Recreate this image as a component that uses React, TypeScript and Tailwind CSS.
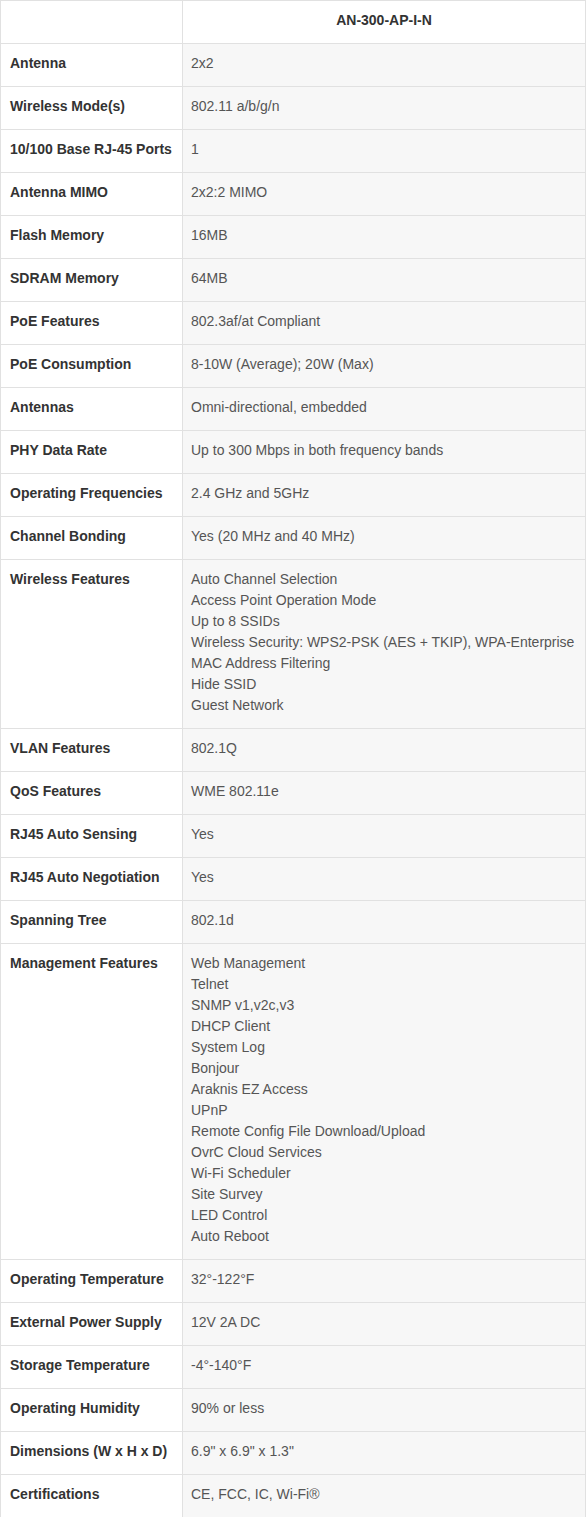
import React from 'react'

// 规格表数据：[标签, 值或多行值]
const specs: [string, string | string[]][] = [
  ['Antenna', '2x2'],
  ['Wireless Mode(s)', '802.11 a/b/g/n'],
  ['10/100 Base RJ-45 Ports', '1'],
  ['Antenna MIMO', '2x2:2 MIMO'],
  ['Flash Memory', '16MB'],
  ['SDRAM Memory', '64MB'],
  ['PoE Features', '802.3af/at Compliant'],
  ['PoE Consumption', '8-10W (Average); 20W (Max)'],
  ['Antennas', 'Omni-directional, embedded'],
  ['PHY Data Rate', 'Up to 300 Mbps in both frequency bands'],
  ['Operating Frequencies', '2.4 GHz and 5GHz'],
  ['Channel Bonding', 'Yes (20 MHz and 40 MHz)'],
  [
    'Wireless Features',
    [
      'Auto Channel Selection',
      'Access Point Operation Mode',
      'Up to 8 SSIDs',
      'Wireless Security: WPS2-PSK (AES + TKIP), WPA-Enterprise',
      'MAC Address Filtering',
      'Hide SSID',
      'Guest Network',
    ],
  ],
  ['VLAN Features', '802.1Q'],
  ['QoS Features', 'WME 802.11e'],
  ['RJ45 Auto Sensing', 'Yes'],
  ['RJ45 Auto Negotiation', 'Yes'],
  ['Spanning Tree', '802.1d'],
  [
    'Management Features',
    [
      'Web Management',
      'Telnet',
      'SNMP v1,v2c,v3',
      'DHCP Client',
      'System Log',
      'Bonjour',
      'Araknis EZ Access',
      'UPnP',
      'Remote Config File Download/Upload',
      'OvrC Cloud Services',
      'Wi-Fi Scheduler',
      'Site Survey',
      'LED Control',
      'Auto Reboot',
    ],
  ],
  ['Operating Temperature', '32°-122°F'],
  ['External Power Supply', '12V 2A DC'],
  ['Storage Temperature', '-4°-140°F'],
  ['Operating Humidity', '90% or less'],
  ['Dimensions (W x H x D)', '6.9" x 6.9" x 1.3"'],
  ['Certifications', 'CE, FCC, IC, Wi-Fi®'],
]

export default function App() {
  return (
    <div className="w-[586px] bg-white font-['Liberation_Sans',Arial,sans-serif] text-[14px] leading-[21px]">
      <table className="w-full border-collapse border border-[#e1e1e1]">
        <thead>
          <tr>
            <th className="w-[182px] border border-[#e1e1e1] bg-white pt-[9px] pb-[12px] px-[9px]"></th>
            <th className="border border-[#e1e1e1] bg-white pt-[9px] pb-[12px] px-[8px] text-center font-bold text-[#333]">
              AN-300-AP-I-N
            </th>
          </tr>
        </thead>
        <tbody>
          {specs.map(([label, value]) => (
            <tr key={label}>
              <td className="border border-[#e1e1e1] bg-white pt-[9px] pb-[12px] pl-[9px] pr-[2px] align-top font-bold text-[#333] whitespace-nowrap">
                {label}
              </td>
              <td className="border border-[#e1e1e1] bg-[#f7f7f7] pt-[9px] pb-[12px] pl-[8px] pr-[2px] align-top text-[#555] whitespace-nowrap">
                {Array.isArray(value)
                  ? value.map((line) => <div key={line}>{line}</div>)
                  : value}
              </td>
            </tr>
          ))}
        </tbody>
      </table>
    </div>
  )
}
